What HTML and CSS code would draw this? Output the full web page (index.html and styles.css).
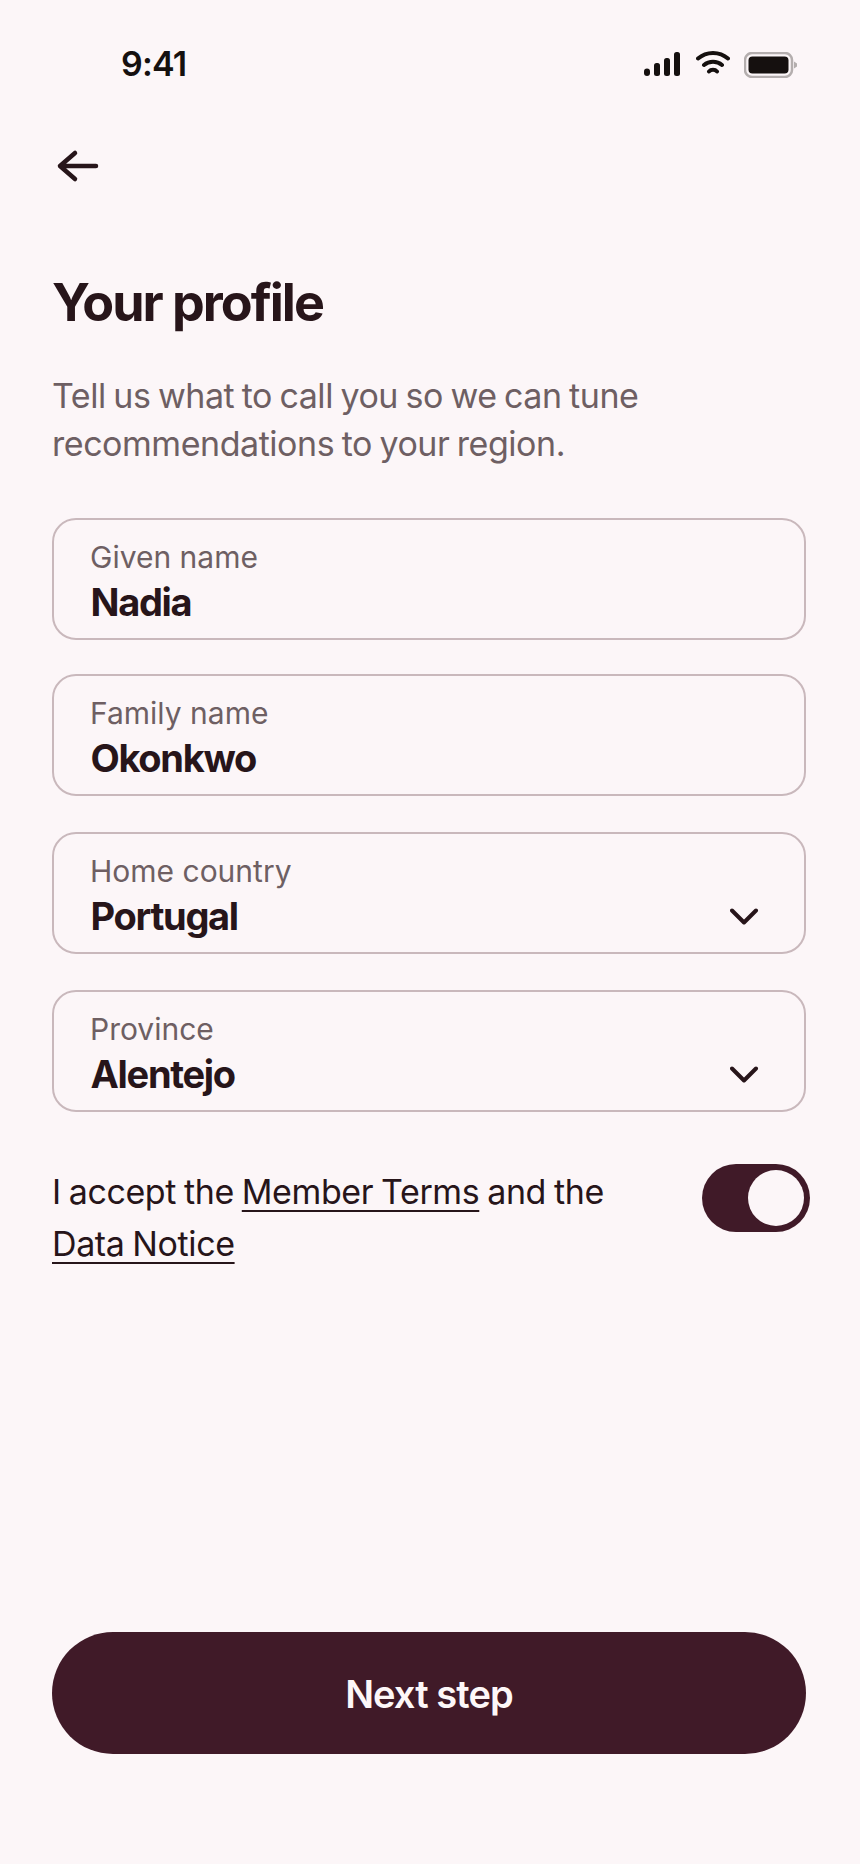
FILE: index.html
```html
<!DOCTYPE html>
<html lang="en">
<head>
<meta charset="utf-8">
<title>Your profile</title>
<link rel="stylesheet" href="styles.css">
</head>
<body>
<main class="screen">
  <header class="status">
    <span class="time">9:41</span>
    <div class="status-icons">
      <svg class="signal" width="38" height="24" viewBox="0 0 38 24"><rect x="0" y="16.500" width="6" height="7.500" rx="3"/><rect x="10" y="11" width="6" height="13" rx="2.500"/><rect x="20" y="6" width="6" height="18" rx="2.500"/><rect x="30" y="0" width="6" height="24" rx="2.500"/></svg>
      <svg class="wifi" width="34" height="24" viewBox="0 0 34 24"><path d="M2 8.500C10.500 1 23.500 1 32 8.500M8 15C13 10.800 21 10.800 26 15" /><path class="dot" d="M13 21.500C15 19.200 19 19.200 21 21.500" /></svg>
      <svg class="battery" width="54" height="26" viewBox="0 0 54 26"><rect class="shell" x="1" y="1" width="47" height="24" rx="7"/><rect class="fill" x="4.500" y="4.500" width="40" height="17" rx="4"/><path class="cap" d="M50 9.500l3 2v3l-3 2z"/></svg>
    </div>
  </header>

  <button class="back" type="button" aria-label="Back">
    <svg width="44" height="38" viewBox="0 0 44 38"><path d="M4 19H40M19 6L4 19L19 32"/></svg>
  </button>

  <h1 class="title">Your profile</h1>
  <p class="intro">Tell us what to call you so we can tune recommendations to your region.</p>

  <form class="fields">
    <div class="field field-tight">
      <span class="label">Given name</span>
      <span class="value">Nadia</span>
    </div>
    <div class="field">
      <span class="label">Family name</span>
      <span class="value">Okonkwo</span>
    </div>
    <div class="field">
      <span class="label">Home country</span>
      <span class="value">Portugal</span>
      <svg class="chevron" width="30" height="18" viewBox="0 0 30 18"><path d="M2 2.500L14 14.500L26 2.500"/></svg>
    </div>
    <div class="field">
      <span class="label">Province</span>
      <span class="value">Alentejo</span>
      <svg class="chevron" width="30" height="18" viewBox="0 0 30 18"><path d="M2 2.500L14 14.500L26 2.500"/></svg>
    </div>
  </form>

  <div class="consent">
    <p class="consent-text">I accept the <a href="#">Member Terms</a> and the <a href="#">Data Notice</a></p>
    <div class="toggle"><span class="knob"></span></div>
  </div>

  <button class="next" type="button">Next step</button>
</main>
</body>
</html>
```
FILE: styles.css
```css
* { box-sizing: border-box; }
html, body { margin: 0; padding: 0; }
body { background: #fcf6f8; color: #27151a; font-family: Inter, "Liberation Sans", sans-serif; }
.screen { width: 860px; height: 1864px; padding: 0 54px 0 52px; display: flex; flex-direction: column; }
.status { height: 130px; flex: none; display: flex; justify-content: space-between; align-items: center; margin-right: 8px; }
.time { font-size: 34px; font-weight: 600; color: #15100f; margin-left: 69px; margin-top: -3px; letter-spacing: -0.800px; }
.status-icons { display: flex; align-items: flex-start; gap: 14px; }
.signal rect { fill: #15100f; }
.wifi { margin-top: -2px; }
.wifi path { fill: none; stroke: #15100f; stroke-width: 4; stroke-linecap: round; }
.battery .shell { fill: none; stroke: #b4aeae; stroke-width: 2.500; }
.battery .fill { fill: #15100f; }
.battery .cap { fill: #b4aeae; }
.back { width: 44px; height: 38px; padding: 0; margin: 17px 0 0 4px; border: 0; background: none; flex: none; }
.back svg { display: block; }
.back path { fill: none; stroke: #27151a; stroke-width: 4.500; stroke-linecap: round; stroke-linejoin: round; }
.title { margin: 88px 0 0; font-size: 52px; line-height: 60px; font-weight: 700; letter-spacing: -2px; }
.intro { margin: 39px 0 0; font-size: 34px; line-height: 48px; color: #6e5f63; letter-spacing: -0.460px; word-spacing: -1.600px; }
.fields { margin-top: 50px; display: flex; flex-direction: column; gap: 36px; }
.field { position: relative; height: 122px; border: 2px solid #c9b8bc; border-radius: 24px; padding: 17px 36px 0; display: flex; flex-direction: column; }
.field-tight { margin-bottom: -2px; }
.label { font-size: 30px; line-height: 40px; color: #6e5f63; }
.value { font-size: 38px; line-height: 48px; margin-top: 1px; font-weight: 700; letter-spacing: -1.300px; padding-left: 0.500px; }
.chevron { position: absolute; right: 44px; top: 74px; }
.chevron path { fill: none; stroke: #27151a; stroke-width: 4; stroke-linecap: round; stroke-linejoin: round; }
.consent { margin-top: 52px; display: flex; justify-content: space-between; align-items: flex-start; margin-right: -4px; }
.consent-text { margin: 0; padding-top: 2px; width: 580px; font-size: 34px; line-height: 52px; color: #27151a; letter-spacing: -0.400px; word-spacing: -1.200px; }
.consent-text a { color: inherit; text-decoration: underline; text-underline-offset: 6px; text-decoration-thickness: 2px; }
.toggle { width: 108px; height: 68px; border-radius: 34px; background: #401a28; padding: 6px; display: flex; justify-content: flex-end; }
.knob { width: 56px; height: 56px; border-radius: 50%; background: #fcf6f8; }
.next { margin-top: auto; margin-bottom: 110px; padding: 2px 0 0; height: 122px; flex: none; border: 0; border-radius: 61px; background: #401a28; color: #fdf7f8; font: 600 38px Inter, "Liberation Sans", sans-serif; letter-spacing: -0.900px; }
```
